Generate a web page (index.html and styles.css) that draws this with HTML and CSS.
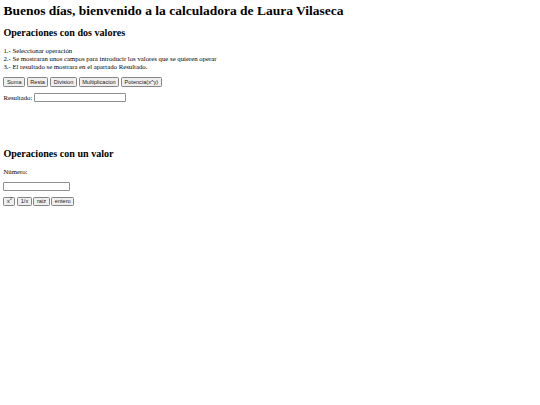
FILE: index.html
```html
<!DOCTYPE html>
<html lang="es">
<head>
<meta charset="utf-8">
<title>Calculadora</title>
<link rel="stylesheet" href="styles.css">
</head>
<body>
<h1>Buenos días, bienvenido a la calculadora de Laura Vilaseca</h1>
<h2>Operaciones con dos valores</h2>
<p>1.- Seleccionar operación<br>2.- Se mostraran unos campos para introducir los valores que se quieren operar<br>3.- El resultado se mostrara en el apartado Resultado.</p>
<div class="buttons">
<button>Suma</button><button>Resta</button><button>Division</button><button>Multiplicacion</button><button>Potencia(x^y)</button>
</div>
<p class="result-row">Resultado: <input class="result" type="text"></p>
<div class="spacer"></div>
<h2>Operaciones con un valor</h2>
<p>Número:</p>
<p><input class="number" type="text"></p>
<div class="buttons">
<button>x<sup>2</sup></button><button>1/x</button><button>raiz</button><button>entero</button>
</div>
</body>
</html>
```
FILE: styles.css
```css
body {
  margin: 3.4px;
  font-family: "Liberation Serif", "Times New Roman", serif;
  font-size: 6.75px;
  line-height: 8px;
  color: #000;
  background: #fff;
}
h1 {
  font-size: 13.5px;
  line-height: 15.5px;
  margin: 0 0 8.4px;
}
h2 {
  font-size: 10.1px;
  line-height: 11.6px;
  margin: 8.4px 0;
}
p {
  margin: 6px 0;
}
.buttons {
  display: flex;
  align-items: flex-start;
  gap: 1.8px;
}
button {
  font-family: "Liberation Sans", Arial, sans-serif;
  font-size: 5.6px;
  line-height: 6.5px;
  padding: 0.4px 2.5px;
  margin: 0;
  border: 1px solid #858585;
  border-radius: 1.3px;
  background: #efefef;
  color: #222;
}
button sup {
  font-size: 4px;
  line-height: 0;
}
input {
  font-size: 5.6px;
  box-sizing: border-box;
  height: 9px;
  padding: 0 1px;
  margin: 0;
  border: 1px solid #8f8f8f;
  border-radius: 1px;
  background: #fff;
  vertical-align: baseline;
}
.result {
  width: 92px;
}
.number {
  width: 67px;
}
.spacer {
  height: 32px;
}
```
